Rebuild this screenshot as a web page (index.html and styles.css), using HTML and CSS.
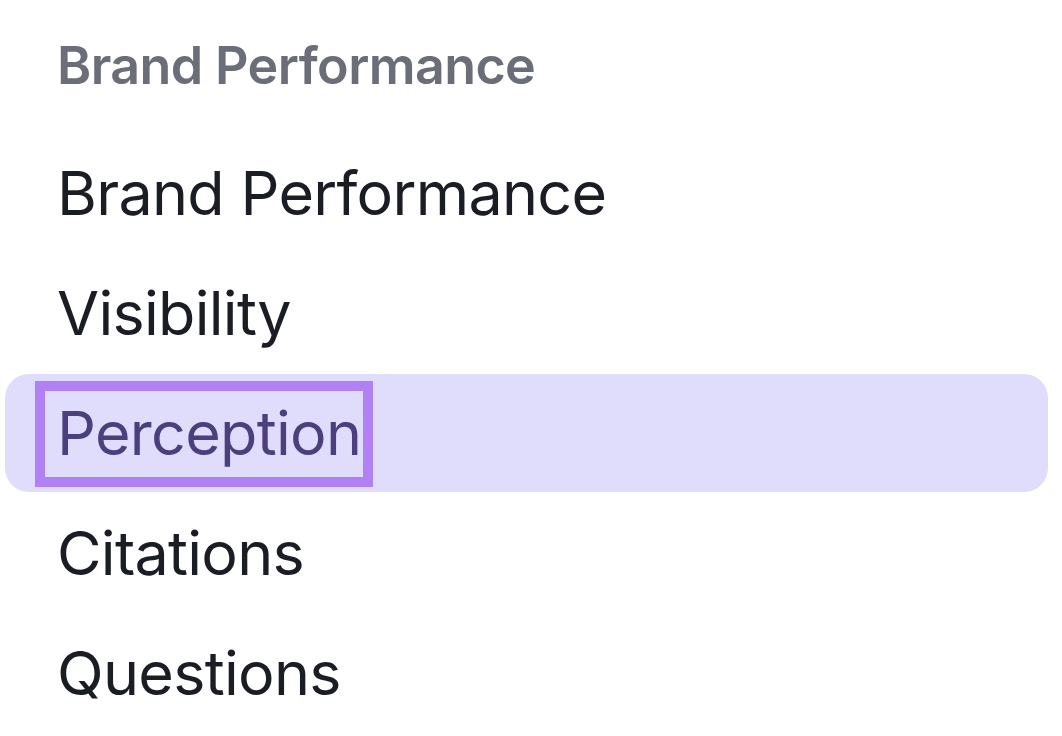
FILE: index.html
```html
<!DOCTYPE html>
<html>
<head>
<meta charset="utf-8">
<link rel="stylesheet" href="styles.css">
</head>
<body>
<nav class="sidebar">
  <div class="section-title">Brand Performance</div>
  <ul class="menu">
    <li class="item">Brand Performance</li>
    <li class="item">Visibility</li>
    <li class="item active"><span class="label">Perception</span></li>
    <li class="item">Citations</li>
    <li class="item">Questions</li>
  </ul>
</nav>
</body>
</html>
```
FILE: styles.css
```css
html, body {
  margin: 0;
  padding: 0;
  background: #ffffff;
}
body {
  font-family: Inter, "Noto Sans", sans-serif;
  width: 1062px;
  height: 736px;
  overflow: hidden;
}
.sidebar {
  padding: 0 14px 0 5px;
}
.section-title {
  height: 134px;
  box-sizing: border-box;
  padding: 40px 0 0 52px;
  font-size: 52px;
  font-weight: 600;
  letter-spacing: -0.6px;
  color: #6b6e78;
  line-height: 1;
}
.menu {
  list-style: none;
  margin: 0;
  padding: 0;
  display: flex;
  flex-direction: column;
  gap: 2px;
}
.item {
  height: 118px;
  display: flex;
  align-items: center;
  padding-left: 52px;
  font-size: 61px;
  letter-spacing: -0.7px;
  color: #1b1d24;
  border-radius: 24px;
}
.item.active {
  background: #e0ddfc;
  color: #4b3f7d;
}
.label {
  position: relative;
}
.label::after {
  content: "";
  position: absolute;
  left: -22px;
  right: -12px;
  top: -15px;
  bottom: -17px;
  border: 10px solid #b180f5;
}
```
